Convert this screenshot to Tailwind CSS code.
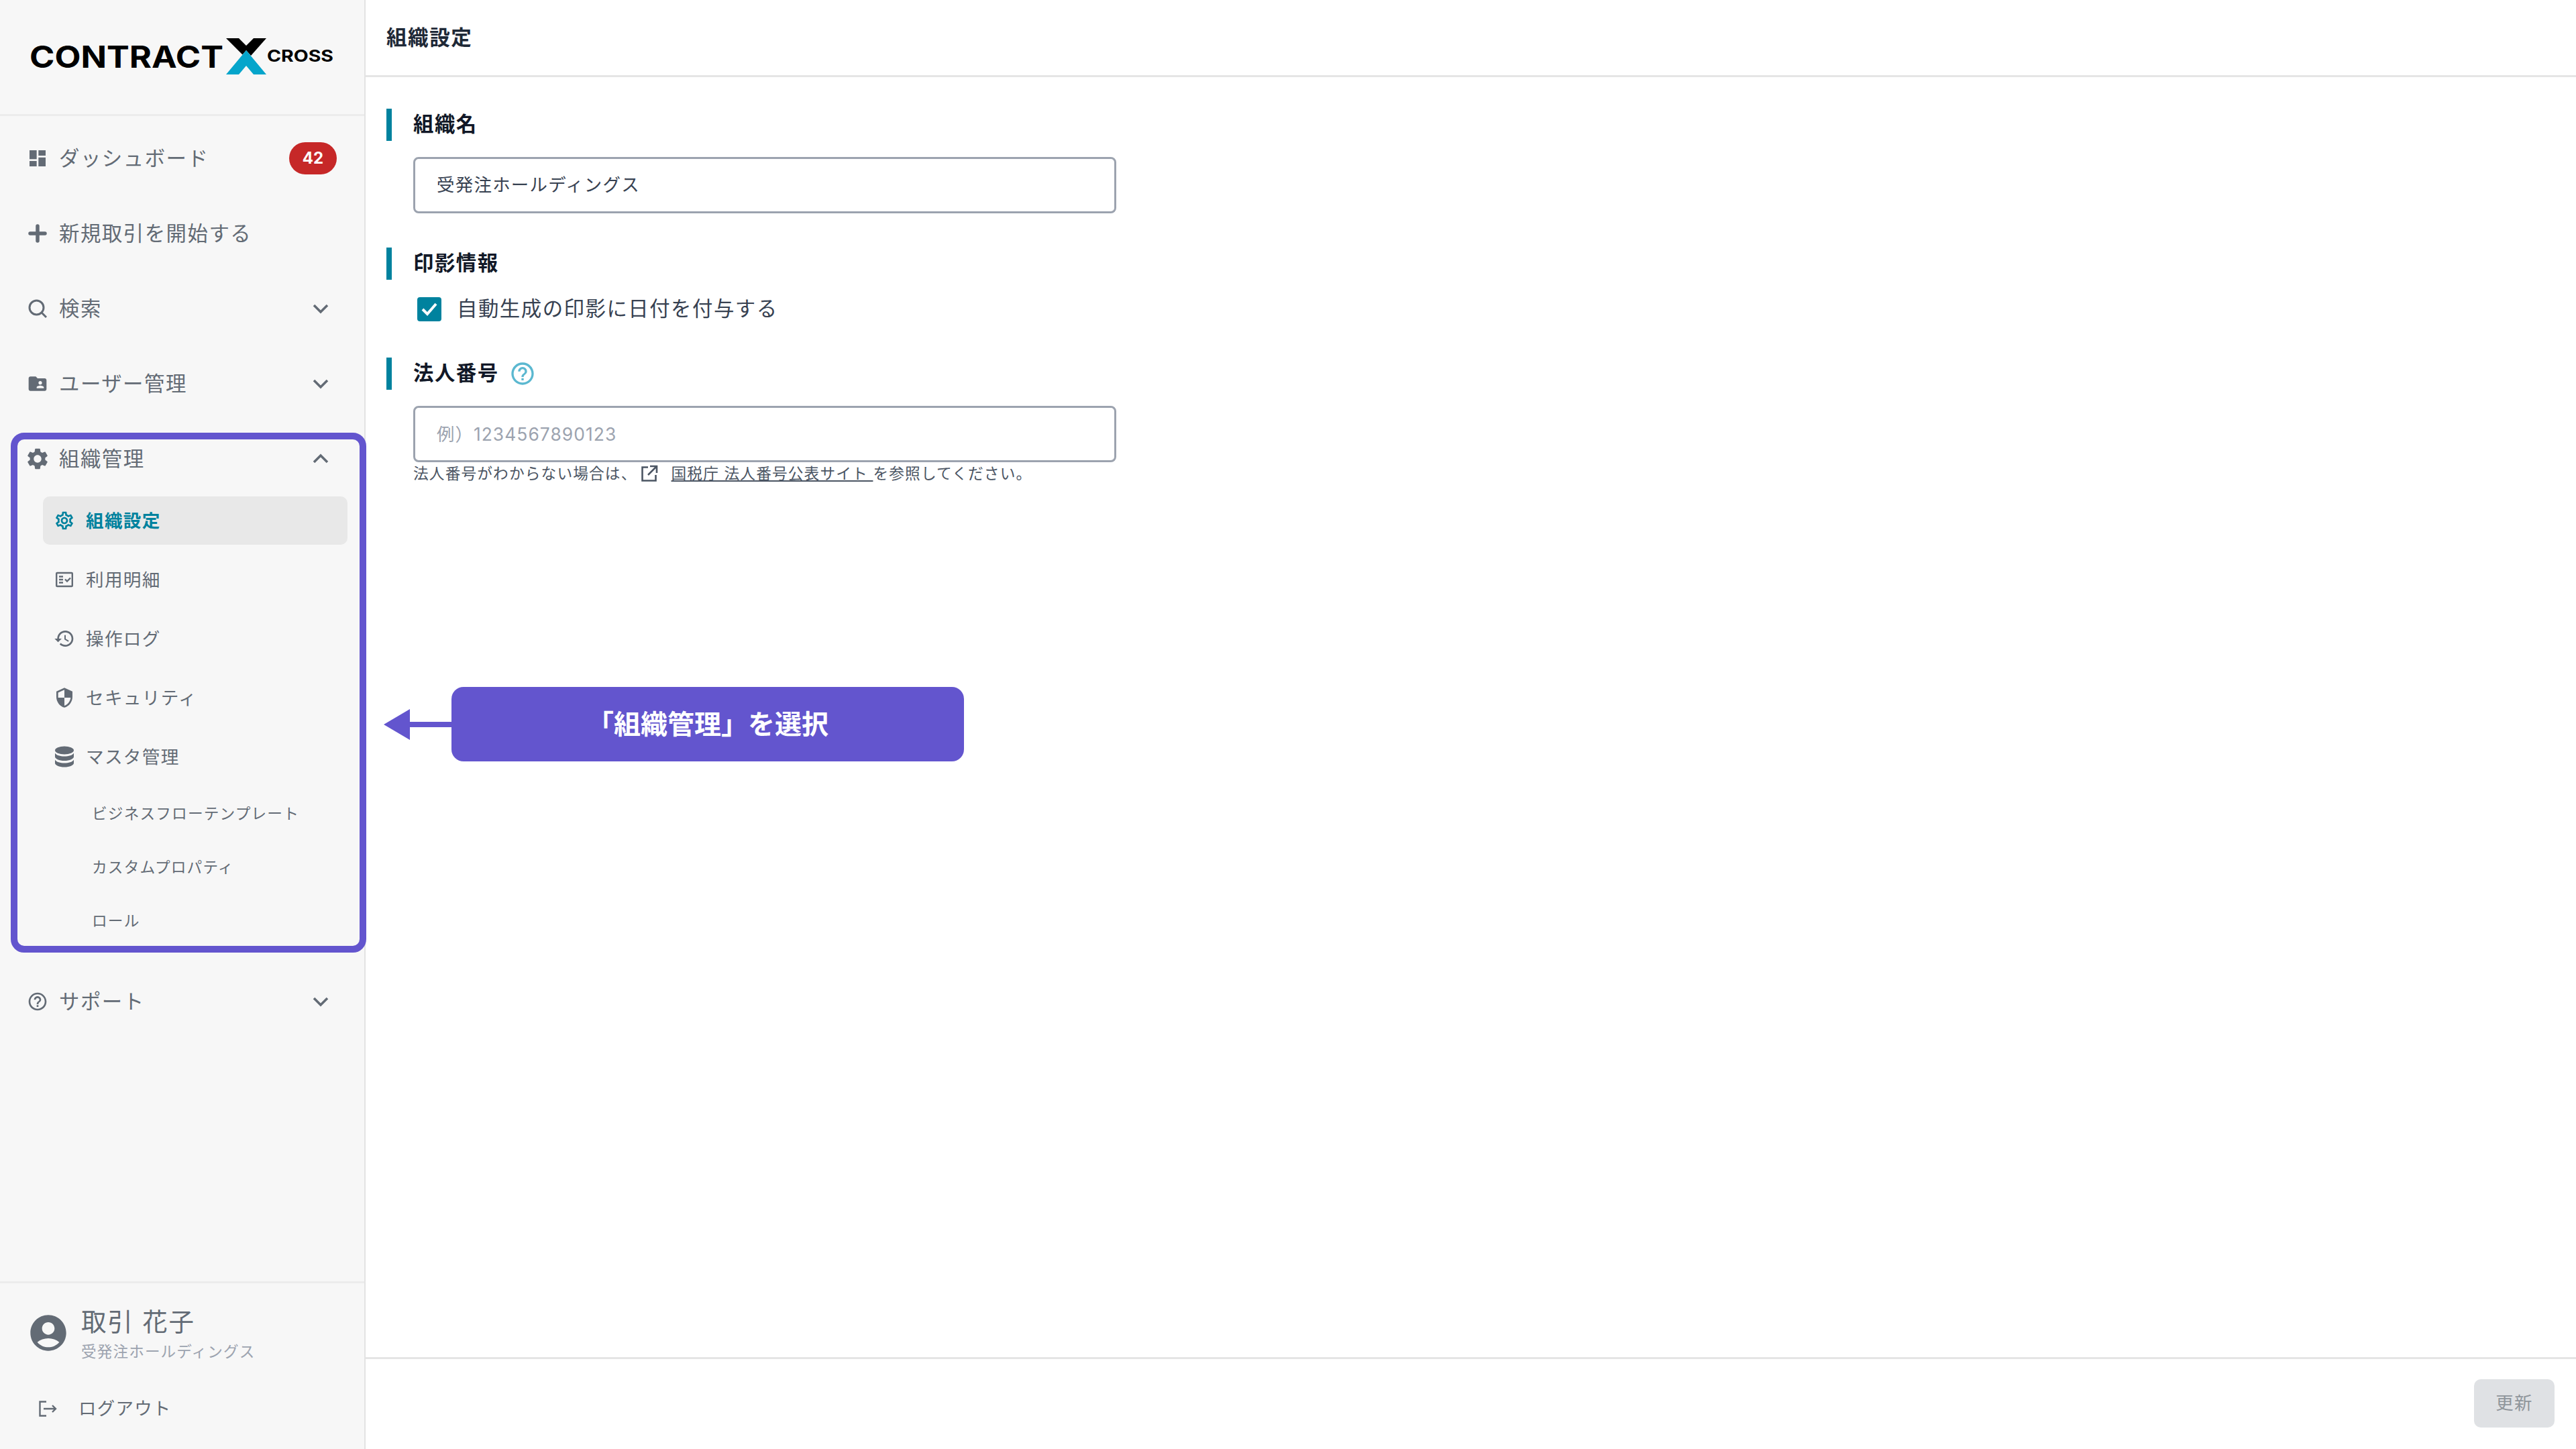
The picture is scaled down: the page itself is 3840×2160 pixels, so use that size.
<!DOCTYPE html>
<html lang="ja">
<head>
  <meta charset="UTF-8" />
  <title>組織設定</title>
  <script src="https://cdn.jsdelivr.net/npm/@tailwindcss/browser@4"></script>
</head>
<body class="relative flex h-screen w-screen overflow-hidden bg-white text-[#636b75] [font-family:Inter,'Noto_Sans_CJK_JP',sans-serif]">

  <!-- sidebar -->
  <aside class="flex h-full w-[545px] shrink-0 flex-col border-r-[2px] border-[#e3e3e3] bg-[#f7f7f7]">
    <div class="flex h-[173px] shrink-0 items-start border-b-[3px] border-[#ececec] pl-[44px] pt-[57px]">
      <svg width="456" height="54" viewBox="0 0 456 54">
        <text x="0" y="44" textLength="289" lengthAdjust="spacingAndGlyphs" font-size="45" class="fill-black font-bold">CONTRACT</text>
        <polygon points="293,0 312,0 323,11 334,0 353,0 330,26 323,18 317.5,24.5" class="fill-black" />
        <polygon points="323,18 353,54 334,54 323,41 312,54 293,54" class="fill-[#05a5cb]" />
        <text x="354" y="35" textLength="99" lengthAdjust="spacingAndGlyphs" font-size="24" class="fill-black font-bold">CROSS</text>
      </svg>
    </div>

    <nav class="flex flex-1 flex-col pt-[7px] text-[30.4px] tracking-[0.05em]">
      <a class="flex h-[112px] items-center gap-4 pl-10 pr-[41px]">
        <svg class="h-8 w-8 shrink-0 fill-current" viewBox="0 0 24 24"><path d="M3 13h8V3H3v10zm0 8h8v-6H3v6zm10 0h8V11h-8v10zm0-18v6h8V3h-8z"/></svg>
        <span class="flex-1 pt-[2px]">ダッシュボード</span>
        <span class="flex h-12 w-[71px] items-center justify-center rounded-full bg-[#c62828] text-[24px] font-bold tracking-normal text-white">42</span>
      </a>
      <a class="flex h-[112px] items-center gap-4 pl-10">
        <svg class="h-8 w-8 shrink-0" viewBox="0 0 32 32" fill="none" stroke="currentColor" stroke-width="5.5" stroke-linecap="round"><path d="M16 5v22M5 16h22"/></svg>
        <span class="pt-[2px]">新規取引を開始する</span>
      </a>
      <a class="flex h-[112px] items-center gap-4 pl-10 pr-[49px]">
        <svg class="h-8 w-8 shrink-0" viewBox="0 0 32 32" fill="none" stroke="currentColor" stroke-width="3"><circle cx="14.5" cy="14.5" r="10.5"/><path d="M22 22l7 7"/></svg>
        <span class="flex-1 pt-[2px]">検索</span>
        <svg class="h-8 w-8" viewBox="0 0 32 32" fill="none" stroke="currentColor" stroke-width="3.6"><path d="M6 11l10 10 10-10"/></svg>
      </a>
      <a class="flex h-[112px] items-center gap-4 pl-10 pr-[49px]">
        <svg class="h-8 w-8 shrink-0 fill-current" viewBox="0 0 24 24"><path d="M20 6h-8l-2-2H4c-1.1 0-2 .9-2 2v12c0 1.1.9 2 2 2h16c1.1 0 2-.9 2-2V8c0-1.1-.9-2-2-2zm-5 3c1.1 0 2 .9 2 2s-.9 2-2 2-2-.9-2-2 .9-2 2-2zm4 8h-8v-1c0-1.33 2.67-2 4-2s4 .67 4 2v1z"/></svg>
        <span class="flex-1 pt-[2px]">ユーザー管理</span>
        <svg class="h-8 w-8" viewBox="0 0 32 32" fill="none" stroke="currentColor" stroke-width="3.6"><path d="M6 11l10 10 10-10"/></svg>
      </a>
      <a class="flex h-[112px] items-center gap-4 pl-10 pr-[49px]">
        <span class="flex h-8 w-8 shrink-0 items-center justify-center">
          <svg class="h-[38px] w-[38px] shrink-0 fill-current" viewBox="0 0 24 24"><path d="M19.14 12.94c.04-.3.06-.61.06-.94 0-.32-.02-.64-.07-.94l2.03-1.58c.18-.14.23-.41.12-.61l-1.92-3.32c-.12-.22-.37-.29-.59-.22l-2.39.96c-.5-.38-1.03-.7-1.62-.94l-.36-2.54c-.04-.24-.24-.41-.48-.41h-3.84c-.24 0-.43.17-.47.41l-.36 2.54c-.59.24-1.13.57-1.62.94l-2.39-.96c-.22-.08-.47 0-.59.22L2.74 8.87c-.12.21-.08.47.12.61l2.03 1.58c-.05.3-.09.63-.09.94s.02.64.07.94l-2.03 1.58c-.18.14-.23.41-.12.61l1.92 3.32c.12.22.37.29.59.22l2.39-.96c.5.38 1.03.7 1.62.94l.36 2.54c.05.24.24.41.48.41h3.84c.24 0 .44-.17.47-.41l.36-2.54c.59-.24 1.13-.56 1.62-.94l2.39.96c.22.08.47 0 .59-.22l1.92-3.32c.12-.22.07-.47-.12-.61l-2.01-1.58zM12 15.6c-1.98 0-3.6-1.62-3.6-3.6s1.62-3.6 3.6-3.6 3.6 1.62 3.6 3.6-1.62 3.6-3.6 3.6z"/></svg>
        </span>
        <span class="flex-1 pt-[2px]">組織管理</span>
        <svg class="h-8 w-8" viewBox="0 0 32 32" fill="none" stroke="currentColor" stroke-width="3.6"><path d="M6 21l10-10 10 10"/></svg>
      </a>

      <div class="ml-16 flex w-[454px] flex-col gap-4 text-[26.6px] tracking-[0.05em]">
        <a class="flex h-[72px] items-center gap-[16px] rounded-[10px] bg-[#e8e8e8] pl-[16px] font-bold text-[#00829e]">
          <svg class="h-8 w-8 shrink-0 fill-current" viewBox="0 0 24 24"><path d="M19.43 12.98c.04-.32.07-.64.07-.98 0-.34-.03-.66-.07-.98l2.11-1.65c.19-.15.24-.42.12-.64l-2-3.46c-.09-.16-.26-.25-.44-.25-.06 0-.12.01-.17.03l-2.49 1c-.52-.4-1.08-.73-1.69-.98l-.38-2.65C14.46 2.18 14.25 2 14 2h-4c-.25 0-.46.18-.49.42l-.38 2.65c-.61.25-1.17.59-1.69.98l-2.49-1c-.06-.02-.12-.03-.18-.03-.17 0-.34.09-.43.25l-2 3.46c-.13.22-.07.49.12.64l2.11 1.65c-.04.32-.07.65-.07.98 0 .33.03.66.07.98l-2.11 1.65c-.19.15-.24.42-.12.64l2 3.46c.09.16.26.25.44.25.06 0 .12-.01.17-.03l2.49-1c.52.4 1.08.73 1.69.98l.38 2.65c.03.24.24.42.49.42h4c.25 0 .46-.18.49-.42l.38-2.65c.61-.25 1.17-.59 1.69-.98l2.49 1c.06.02.12.03.18.03.17 0 .34-.09.43-.25l2-3.46c.12-.22.07-.49-.12-.64l-2.11-1.65zm-1.98-1.71c.04.31.05.52.05.73 0 .21-.02.43-.05.73l-.14 1.13.89.7 1.08.84-.7 1.21-1.27-.51-1.04-.42-.9.68c-.43.32-.84.56-1.25.73l-1.06.43-.16 1.13-.2 1.35h-1.4l-.19-1.35-.16-1.13-1.06-.43c-.43-.18-.83-.41-1.23-.71l-.91-.7-1.06.43-1.27.51-.7-1.21 1.08-.84.89-.7-.14-1.13c-.03-.31-.05-.54-.05-.74s.02-.43.05-.73l.14-1.13-.89-.7-1.08-.84.7-1.21 1.27.51 1.04.42.9-.68c.43-.32.84-.56 1.25-.73l1.06-.43.16-1.13.2-1.35h1.39l.19 1.35.16 1.13 1.06.43c.43.18.83.41 1.23.71l.91.7 1.06-.43 1.27-.51.7 1.21-1.07.85-.89.7.14 1.13zM12 8c-2.21 0-4 1.79-4 4s1.79 4 4 4 4-1.79 4-4-1.79-4-4-4zm0 6c-1.1 0-2-.9-2-2s.9-2 2-2 2 .9 2 2-.9 2-2 2z"/></svg>
          <span class="pt-[2px]">組織設定</span>
        </a>
        <a class="flex h-[72px] items-center gap-[16px] pl-[16px]">
          <svg class="h-8 w-8 shrink-0" viewBox="0 0 32 32" fill="none" stroke="currentColor" stroke-width="2.4"><rect x="4.2" y="6" width="23.6" height="20" rx="1"/><path d="M8 11.5h6M8 16h6M8 20.5h6M17 15.5l3 3 5-5"/></svg>
          <span class="pt-[2px]">利用明細</span>
        </a>
        <a class="flex h-[72px] items-center gap-[16px] pl-[16px]">
          <svg class="h-8 w-8 shrink-0 fill-current" viewBox="0 0 24 24"><path d="M13 3c-4.97 0-9 4.03-9 9H1l3.89 3.89.07.14L9 12H6c0-3.87 3.13-7 7-7s7 3.13 7 7-3.13 7-7 7c-1.93 0-3.68-.79-4.94-2.06l-1.42 1.42C8.27 19.99 10.51 21 13 21c4.97 0 9-4.03 9-9s-4.03-9-9-9zm-1 5v5l4.28 2.54.72-1.21-3.5-2.08V8H12z"/></svg>
          <span class="pt-[2px]">操作ログ</span>
        </a>
        <a class="flex h-[72px] items-center gap-[16px] pl-[16px]">
          <svg class="h-8 w-8 shrink-0 fill-current" viewBox="0 0 24 24"><path d="M12 1L3 5v6c0 5.55 3.84 10.74 9 12 5.16-1.26 9-6.45 9-12V5l-9-4zm0 10.99h7c-.53 4.12-3.28 7.79-7 8.94V12H5V6.3l7-3.11v8.8z"/></svg>
          <span class="pt-[2px]">セキュリティ</span>
        </a>
        <a class="flex h-[72px] items-center gap-[16px] pl-[16px]">
          <svg class="h-8 w-8 shrink-0 fill-current" viewBox="0 0 32 32"><ellipse cx="16" cy="6.5" rx="14" ry="6"/><path d="M2 10.5c2 3.6 7.800 5 14 5s12-1.400 14-5V16c0 3.300-6.300 6-14 6S2 19.300 2 16zM2 20.500c2 3.600 7.800 5 14 5s12-1.400 14-5V25.500c0 3.300-6.300 6-14 6s-14-2.700-14-6z"/></svg>
          <span class="pt-[2px]">マスタ管理</span>
        </a>
      </div>

      <div class="mt-[7px] flex flex-col pl-[137px] pt-[2px] text-[22.7px] tracking-[0.05em]">
        <a class="flex h-20 items-center">ビジネスフローテンプレート</a>
        <a class="flex h-20 items-center">カスタムプロパティ</a>
        <a class="flex h-20 items-center">ロール</a>
      </div>

      <a class="mt-6 flex h-[112px] items-center gap-4 pl-10 pr-[49px]">
        <svg class="h-8 w-8 shrink-0 fill-current" viewBox="0 0 24 24"><path d="M11 18h2v-2h-2v2zm1-16C6.480 2 2 6.480 2 12s4.480 10 10 10 10-4.480 10-10S17.520 2 12 2zm0 18c-4.410 0-8-3.590-8-8s3.590-8 8-8 8 3.590 8 8-3.590 8-8 8zm0-14c-2.210 0-4 1.790-4 4h2c0-1.100.9-2 2-2s2 .9 2 2c0 2-3 1.750-3 5h2c0-2.250 3-2.500 3-5 0-2.210-1.790-4-4-4z"/></svg>
        <span class="flex-1 pt-[2px]">サポート</span>
        <svg class="h-8 w-8" viewBox="0 0 32 32" fill="none" stroke="currentColor" stroke-width="3.6"><path d="M6 11l10 10 10-10"/></svg>
      </a>
    </nav>

    <div class="h-[250px] shrink-0 border-t-[3px] border-[#ececec]">
      <div class="flex items-center gap-[17px] pl-[40px] pt-[35px]">
        <svg class="-mt-[5px] h-16 w-16 shrink-0 fill-current" viewBox="0 0 24 24"><path d="M12 2C6.480 2 2 6.480 2 12s4.480 10 10 10 10-4.480 10-10S17.520 2 12 2zm0 4c1.930 0 3.500 1.570 3.500 3.500S13.930 13 12 13s-3.500-1.570-3.500-3.500S10.070 6 12 6zm0 14c-2.030 0-4.430-.82-6.140-2.880C7.550 15.800 9.680 15 12 15s4.450.8 6.140 2.120C16.430 19.180 14.030 20 12 20z"/></svg>
        <div class="flex flex-col">
          <span class="text-[37.5px] leading-[46px] tracking-[0.05em]">取引 花子</span>
          <span class="mt-[6px] text-[22.6px] leading-[30px] tracking-[0.05em] text-[#9ca3af]">受発注ホールディングス</span>
        </div>
      </div>
      <a class="mt-[50px] flex items-center gap-[30px] pl-[55px] text-[26.4px] tracking-[0.05em]">
        <svg class="h-[32px] w-[32px] shrink-0" viewBox="0 0 32 32" fill="none" stroke="currentColor" stroke-width="2.4"><path d="M14 5.500H4.500v21H14M10 16h18M23 11l5 5-5 5"/></svg>
        <span>ログアウト</span>
      </a>
    </div>
  </aside>

  <!-- main -->
  <main class="flex h-full min-w-0 flex-1 flex-col">
    <header class="flex h-[115px] shrink-0 items-center border-b-[3px] border-[#e5e5e5] pl-[31px]">
      <h1 class="text-[30.6px] font-semibold tracking-[0.05em] text-[#1f2937]">組織設定</h1>
    </header>

    <div class="flex-1 pl-[31px] pt-[47px]">
      <h2 class="flex h-12 items-center border-l-[8px] border-[#00829e] pl-[32px] text-[30.4px] font-bold tracking-[0.05em] text-[#111827]">組織名</h2>
      <input class="mt-6 ml-[40px] block h-[84px] w-[1048px] rounded-[8px] border-[3px] border-[#9ca3af] px-[32px] pb-[5px] text-[26.4px] tracking-[0.05em] text-[#374151]" value="受発注ホールディングス" />

      <h2 class="mt-[51px] flex h-12 items-center border-l-[8px] border-[#00829e] pl-[32px] text-[30.4px] font-bold tracking-[0.05em] text-[#111827]">印影情報</h2>
      <label class="mt-[26px] ml-[46px] flex h-9 items-center gap-[23px] text-[30.4px] tracking-[0.05em] text-[#374151]">
        <span class="flex h-9 w-9 items-center justify-center rounded-[4px] bg-[#00829e]">
          <svg class="h-7 w-7" viewBox="0 0 28 28" fill="none" stroke="white" stroke-width="4"><path d="M4 14l7 7L24 6"/></svg>
        </span>
        自動生成の印影に日付を付与する
      </label>

      <h2 class="mt-[54px] flex h-12 items-center gap-[15px] border-l-[8px] border-[#00829e] pl-[32px] text-[30.4px] font-bold tracking-[0.05em] text-[#111827]">
        法人番号
        <svg class="h-10 w-10 fill-[#5bb8d0]" viewBox="0 0 24 24"><path d="M11 18h2v-2h-2v2zm1-16C6.480 2 2 6.480 2 12s4.480 10 10 10 10-4.480 10-10S17.520 2 12 2zm0 18c-4.410 0-8-3.590-8-8s3.590-8 8-8 8 3.590 8 8-3.590 8-8 8zm0-14c-2.210 0-4 1.790-4 4h2c0-1.100.9-2 2-2s2 .9 2 2c0 2-3 1.750-3 5h2c0-2.250 3-2.500 3-5 0-2.210-1.790-4-4-4z"/></svg>
      </h2>
      <input class="mt-6 ml-[40px] block h-[84px] w-[1048px] rounded-[8px] border-[3px] border-[#9ca3af] px-[32px] text-[26.4px] tracking-[0.04em] text-[#374151] placeholder:text-[#9ca3af]" placeholder="例）1234567890123" />
      <p class="ml-[40px] mt-[2px] flex items-center text-[22.7px] leading-[30px] tracking-[0.05em] text-[#4b5563]">
        法人番号がわからない場合は、
        <svg class="ml-[5px] mr-[20px] h-[26px] w-[26px] shrink-0" viewBox="0 0 26 26" fill="none" stroke="currentColor" stroke-width="2.6"><path d="M11 3.500H2.500v20h20V15M14 2h10v10M24 2L11 15"/></svg>
        <a class="whitespace-pre underline">国税庁 法人番号公表サイト </a>
        を参照してください。
      </p>
    </div>

    <footer class="flex h-[137px] shrink-0 justify-end border-t-[3px] border-[#e5e5e5] pr-8 pt-[30px]">
      <button class="h-[72px] w-[120px] rounded-[10px] bg-[#dfe1e4] text-[26.4px] tracking-[0.05em] text-[#8f959b]">更新</button>
    </footer>
  </main>

  <!-- annotation overlay -->
  <div class="absolute left-[16px] top-[645px] h-[775px] w-[530px] rounded-[20px] border-[10px] border-[#6355ce]"></div>
  <div class="absolute left-[572px] top-[1024px] flex h-[111px] items-center">
    <svg class="h-[46px] w-[101px]" viewBox="0 0 101 46"><polygon points="0,23 39,0 39,19 101,19 101,27 39,27 39,46" class="fill-[#6355ce]" /></svg>
    <div class="flex h-[111px] w-[764px] items-center justify-center rounded-[18px] bg-[#6355ce] text-[40px] font-bold text-white">「組織管理」を選択</div>
  </div>
</body>
</html>
